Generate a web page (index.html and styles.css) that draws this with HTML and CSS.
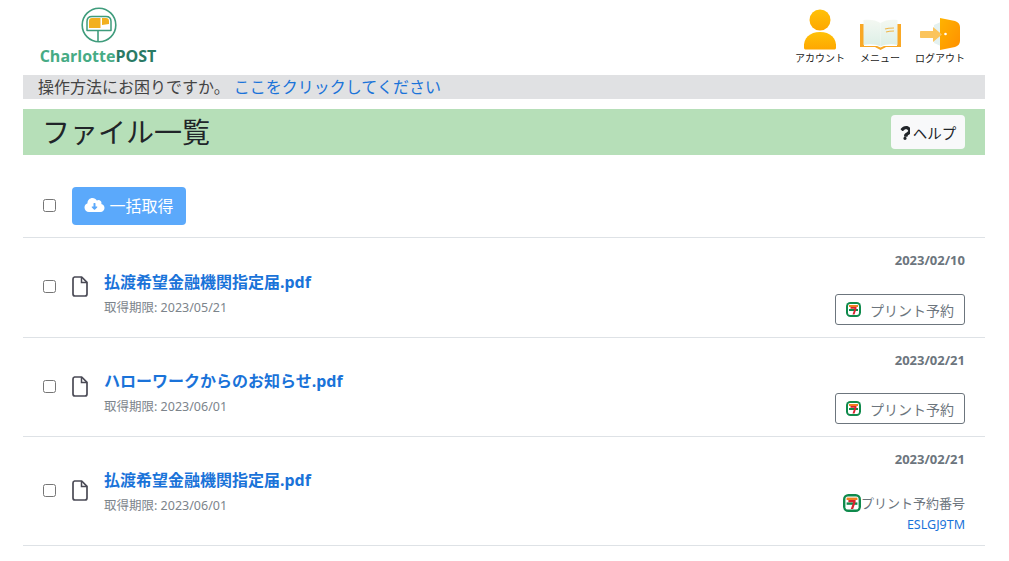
FILE: index.html
```html
<!DOCTYPE html>
<html lang="ja">
<head>
<meta charset="utf-8">
<title>ファイル一覧</title>
<link rel="stylesheet" href="styles.css">
</head>
<body>
<div class="page">
  <header class="top">
    <div class="logo">
      <svg class="logo-mark" width="36" height="36" viewBox="0 0 36 36">
        <circle cx="18" cy="18" r="16.800" fill="#fff" stroke="#3f9c7c" stroke-width="1.600"/>
        <path d="M6 23.500v-9c0-3 2-5 5-5h14c3 0 5 2 5 5v9z" fill="#fff" stroke="#3f9c7c" stroke-width="1.500" stroke-linejoin="round"/>
        <path d="M8 21v-7c0-1.800 1.200-3 3-3h8.500v10z" fill="#f2b01e"/>
        <path d="M21 11h4c1.800 0 3 1.200 3 3v3l-7 1z" fill="#f2b01e"/>
        <path d="M17 23.500v11" fill="none" stroke="#3f9c7c" stroke-width="1.600"/>
      </svg>
      <div class="logo-text"><span class="logo-a">Charlotte</span><span class="logo-b">POST</span></div>
    </div>
    <nav class="nav">
      <a class="nav-item">
        <svg width="34" height="41" viewBox="0 0 34 41"><defs><linearGradient id="g1" x1="0" y1="0" x2="0" y2="1"><stop offset="0" stop-color="#ffc107"/><stop offset="1" stop-color="#fea700"/></linearGradient></defs><circle cx="17" cy="11" r="10.500" fill="url(#g1)"/><path d="M1 39c-1-10 6-16 16-16s17 6 16 16c-.2 1-1 1.500-2 1.500H3c-1 0-1.800-.5-2-1.500z" fill="url(#g1)"/></svg>
        <span>アカウント</span>
      </a>
      <a class="nav-item">
        <svg width="41" height="31" viewBox="0 0 41 31"><defs><linearGradient id="g2" x1="0" y1="0" x2="0" y2="1"><stop offset="0" stop-color="#f4f8f2"/><stop offset="1" stop-color="#dcefe6"/></linearGradient></defs><path d="M0 5h4v22h13l3.500 1.500L24 27h13V5h4v23H26l-5.500 3-5.500-3H0z" fill="#f9a825"/><path d="M3.500 1c6-1 13 0 17 3v23.500c-4-2-11-3-17-1.500z" fill="url(#g2)"/><path d="M37.500 1c-6-1-13 0-17 3v23.500c4-2 11-3 17-1.500z" fill="url(#g2)"/><path d="M25 10c3-1 6-1 9-1M26 13c3-1 5-1 8-1" stroke="#f0b648" stroke-width="1.200" fill="none"/></svg>
        <span>メニュー</span>
      </a>
      <a class="nav-item">
        <svg width="41" height="32" viewBox="0 0 41 32"><defs><linearGradient id="g3" x1="0" y1="0" x2="1" y2="1"><stop offset="0" stop-color="#ffb300"/><stop offset="1" stop-color="#ff8f00"/></linearGradient></defs><path d="M14 7l9-4v26l-9-4z" fill="#e4f1f0"/><path d="M20 0l15 3c3 1 5 3 5 6v14c0 3-2 5-5 6l-15 3z" fill="url(#g3)"/><path d="M1 13h12V9l9 7.500-9 7.500v-4H1c-.6 0-1-.4-1-1v-5c0-.6.4-1 1-1z" fill="#fbc45c"/><circle cx="25.500" cy="16" r="1.300" fill="#fff"/></svg>
        <span>ログアウト</span>
      </a>
    </nav>
  </header>

  <div class="notice">操作方法にお困りですか。 <a class="notice-link">ここをクリックしてください</a></div>

  <div class="titlebar">
    <h1>ファイル一覧</h1>
    <button class="help"><svg width="10" height="15" viewBox="0 0 320 512"><path d="M204 32C117 32 61 68 17 131c-8 11-6 27 5 35l47 36c11 8 26 6 35-4 27-34 47-53 90-53 33 0 74 21 74 53 0 24-20 37-53 55-38 21-88 48-88 114v10c0 13 11 24 24 24h79c13 0 24-11 24-24v-6c0-46 134-48 134-172C368 106 286 32 204 32zM160 400a56 56 0 1 0 0 112 56 56 0 0 0 0-112z" fill="#212529"/></svg>ヘルプ</button>
  </div>

  <div class="toolbar">
    <span class="check"></span>
    <button class="bulk">
      <svg width="21" height="16" viewBox="0 0 640 512"><path d="M537.600 226.600c4.100-10.700 6.400-22.400 6.400-34.600 0-53-43-96-96-96-19.700 0-38.100 6-53.300 16.200C367 64.200 315.300 32 256 32c-88.400 0-160 71.600-160 160 0 2.700.1 5.400.2 8.100C40.200 219.800 0 273.200 0 336c0 79.500 64.500 144 144 144h368c70.700 0 128-57.300 128-128 0-61.900-44-113.600-102.400-125.400zM404.700 332.700l-73.400 73.400c-6.200 6.200-16.400 6.200-22.600 0l-73.400-73.400c-10.100-10.100-2.900-27.300 11.300-27.300H288V208c0-8.800 7.200-16 16-16h32c8.800 0 16 7.200 16 16v97.400h41.400c14.200 0 21.400 17.200 11.300 27.300z" fill="#fff"/></svg>
      一括取得
    </button>
  </div>

  <section class="row row-1">
    <span class="check"></span>
    <svg class="file" width="16" height="21" viewBox="0 0 16 21"><path d="M2.500 1h7.200L15 6.300V18a2 2 0 0 1-2 2H3a2 2 0 0 1-2-2V3a2 2 0 0 1 1.500-2z" fill="#fff" stroke="#4a4a55" stroke-width="1.700" stroke-linejoin="round"/><path d="M9.500 1v5.500H15" fill="none" stroke="#4a4a55" stroke-width="1.500"/></svg>
    <div class="info">
      <a class="name">払渡希望金融機関指定届.pdf</a>
      <div class="limit">取得期限: 2023/05/21</div>
    </div>
    <div class="side">
      <div class="date">2023/02/10</div>
      <button class="print"><svg class="seven" width="15" height="15" viewBox="0 0 15 15"><rect width="15" height="15" rx="4.500" fill="#0f8a4c"/><rect x="2" y="2" width="11" height="11" rx="2" fill="#fff"/><path d="M3 3h9v2H3z" fill="#f08020"/><path d="M3 7h9v2H3z" fill="#0f8a4c"/><path d="M4.500 5h6v1.600L8.500 12.500h-2L8.500 6.800h-4z" fill="#d9232e"/></svg>プリント予約</button>
    </div>
  </section>

  <section class="row row-2">
    <span class="check"></span>
    <svg class="file" width="16" height="21" viewBox="0 0 16 21"><path d="M2.500 1h7.200L15 6.300V18a2 2 0 0 1-2 2H3a2 2 0 0 1-2-2V3a2 2 0 0 1 1.500-2z" fill="#fff" stroke="#4a4a55" stroke-width="1.700" stroke-linejoin="round"/><path d="M9.500 1v5.500H15" fill="none" stroke="#4a4a55" stroke-width="1.500"/></svg>
    <div class="info">
      <a class="name">ハローワークからのお知らせ.pdf</a>
      <div class="limit">取得期限: 2023/06/01</div>
    </div>
    <div class="side">
      <div class="date">2023/02/21</div>
      <button class="print"><svg class="seven" width="15" height="15" viewBox="0 0 15 15"><rect width="15" height="15" rx="4.500" fill="#0f8a4c"/><rect x="2" y="2" width="11" height="11" rx="2" fill="#fff"/><path d="M3 3h9v2H3z" fill="#f08020"/><path d="M3 7h9v2H3z" fill="#0f8a4c"/><path d="M4.500 5h6v1.600L8.500 12.500h-2L8.500 6.800h-4z" fill="#d9232e"/></svg>プリント予約</button>
    </div>
  </section>

  <section class="row row-3">
    <span class="check"></span>
    <svg class="file" width="16" height="21" viewBox="0 0 16 21"><path d="M2.500 1h7.200L15 6.300V18a2 2 0 0 1-2 2H3a2 2 0 0 1-2-2V3a2 2 0 0 1 1.500-2z" fill="#fff" stroke="#4a4a55" stroke-width="1.700" stroke-linejoin="round"/><path d="M9.500 1v5.500H15" fill="none" stroke="#4a4a55" stroke-width="1.500"/></svg>
    <div class="info">
      <a class="name">払渡希望金融機関指定届.pdf</a>
      <div class="limit">取得期限: 2023/06/01</div>
    </div>
    <div class="side">
      <div class="date">2023/02/21</div>
      <div class="reserved"><svg width="18" height="18" viewBox="0 0 15 15"><rect width="15" height="15" rx="4.500" fill="#0f8a4c"/><rect x="2" y="2" width="11" height="11" rx="2" fill="#fff"/><path d="M3 3h9v2H3z" fill="#f08020"/><path d="M3 7h9v2H3z" fill="#0f8a4c"/><path d="M4.500 5h6v1.600L8.500 12.500h-2L8.500 6.800h-4z" fill="#d9232e"/></svg>プリント予約番号</div>
      <div class="code">ESLGJ9TM</div>
    </div>
  </section>
</div>
</body>
</html>
```
FILE: styles.css
```css
* { box-sizing: border-box; }
html, body { margin: 0; padding: 0; }
body {
  background: #fff;
  color: #212529;
  font-family: "Noto Sans", "Noto Sans CJK JP", sans-serif;
  overflow: hidden;
}
.page { width: 962px; margin-left: 23px; }

.top { height: 75px; display: flex; justify-content: space-between; }
.logo { width: 150px; display: flex; flex-direction: column; align-items: center; padding-top: 7px; }
.logo-mark { display: block; margin-left: 1px; }
.logo-text { font-family: "Open Sans", sans-serif; font-weight: 700; font-size: 16px; line-height: 20px; margin-top: 3px; white-space: nowrap; }
.logo-a { color: #46ab85; }
.logo-b { color: #2a7a64; }

.nav { display: flex; gap: 10px; padding: 9px 20px 0 0; }
.nav-item { display: flex; flex-direction: column; align-items: center; justify-content: flex-end; height: 56px; width: 50px; font-size: 10px; line-height: 14px; color: #222; white-space: nowrap; }
.nav-item svg { display: block; flex: none; }
.nav-item span { display: block; margin-top: 1px; }

.notice { height: 24px; background: #e0e1e3; padding-left: 15px; font-size: 16px; line-height: 24px; color: #444; white-space: nowrap; }
.notice-link { color: #1a73d9; }

.titlebar { margin-top: 10px; height: 46px; background: #b6dfb8; display: flex; align-items: center; justify-content: space-between; padding: 0 20px 0 19px; }
h1 { margin: 0; font-size: 28px; font-weight: 400; line-height: 46px; color: #212529; }
.help { width: 74px; height: 34px; border: 0; border-radius: 4px; background: #f8f9fa; color: #212529; font: inherit; font-size: 14.500px; display: flex; align-items: center; justify-content: center; gap: 3px; padding: 0; }

.toolbar { height: 83px; display: flex; align-items: center; border-bottom: 1px solid #dee2e6; padding: 20px 0 0 20px; }
.toolbar .check { margin-bottom: 2px; }
.check { flex: none; width: 13px; height: 13px; border: 1px solid #767676; border-radius: 2.500px; background: #fff; }
.bulk { margin-left: 16px; width: 114px; height: 38px; border: 0; border-radius: 4px; background: #5ba9fb; color: #fff; font: inherit; font-size: 16px; display: flex; align-items: center; justify-content: center; gap: 4px; padding: 0 0 2px; }

.row { display: flex; align-items: center; border-bottom: 1px solid #dee2e6; padding-left: 20px; }
.row > .check, .row > .file { margin-bottom: 2px; }
.row-1 { height: 100px; }
.row-2 { height: 99px; }
.row-3 { height: 109px; }
.file { flex: none; margin-left: 16px; }
.info { margin-left: 16px; flex: 1; align-self: flex-start; padding-top: 31px; }
.row-1 .info { padding-top: 32px; }
.name { display: block; color: #1a73d9; font-weight: 700; font-size: 16px; line-height: 24px; }
.limit { margin-top: 5px; font-size: 12.500px; line-height: 18px; color: #7c848b; }

.side { align-self: stretch; display: flex; flex-direction: column; align-items: flex-end; padding: 13px 20px 0 0; }
.date { font-size: 13px; font-weight: 700; line-height: 18px; color: #6c757d; }
.print { margin-top: 25px; width: 130px; height: 31px; border: 1px solid #6c757d; border-radius: 3px; background: #fff; color: #6c757d; font: inherit; font-size: 14px; display: flex; align-items: center; justify-content: center; gap: 9px; padding: 0; }
.row-2 .print { margin-top: 24px; }
.seven { flex: none; }
.reserved { margin-top: 26px; display: flex; align-items: center; font-size: 13px; line-height: 18px; color: #6c757d; white-space: nowrap; }
.code { margin-top: 4px; font-size: 12.500px; line-height: 18px; color: #1a73d9; }
```
